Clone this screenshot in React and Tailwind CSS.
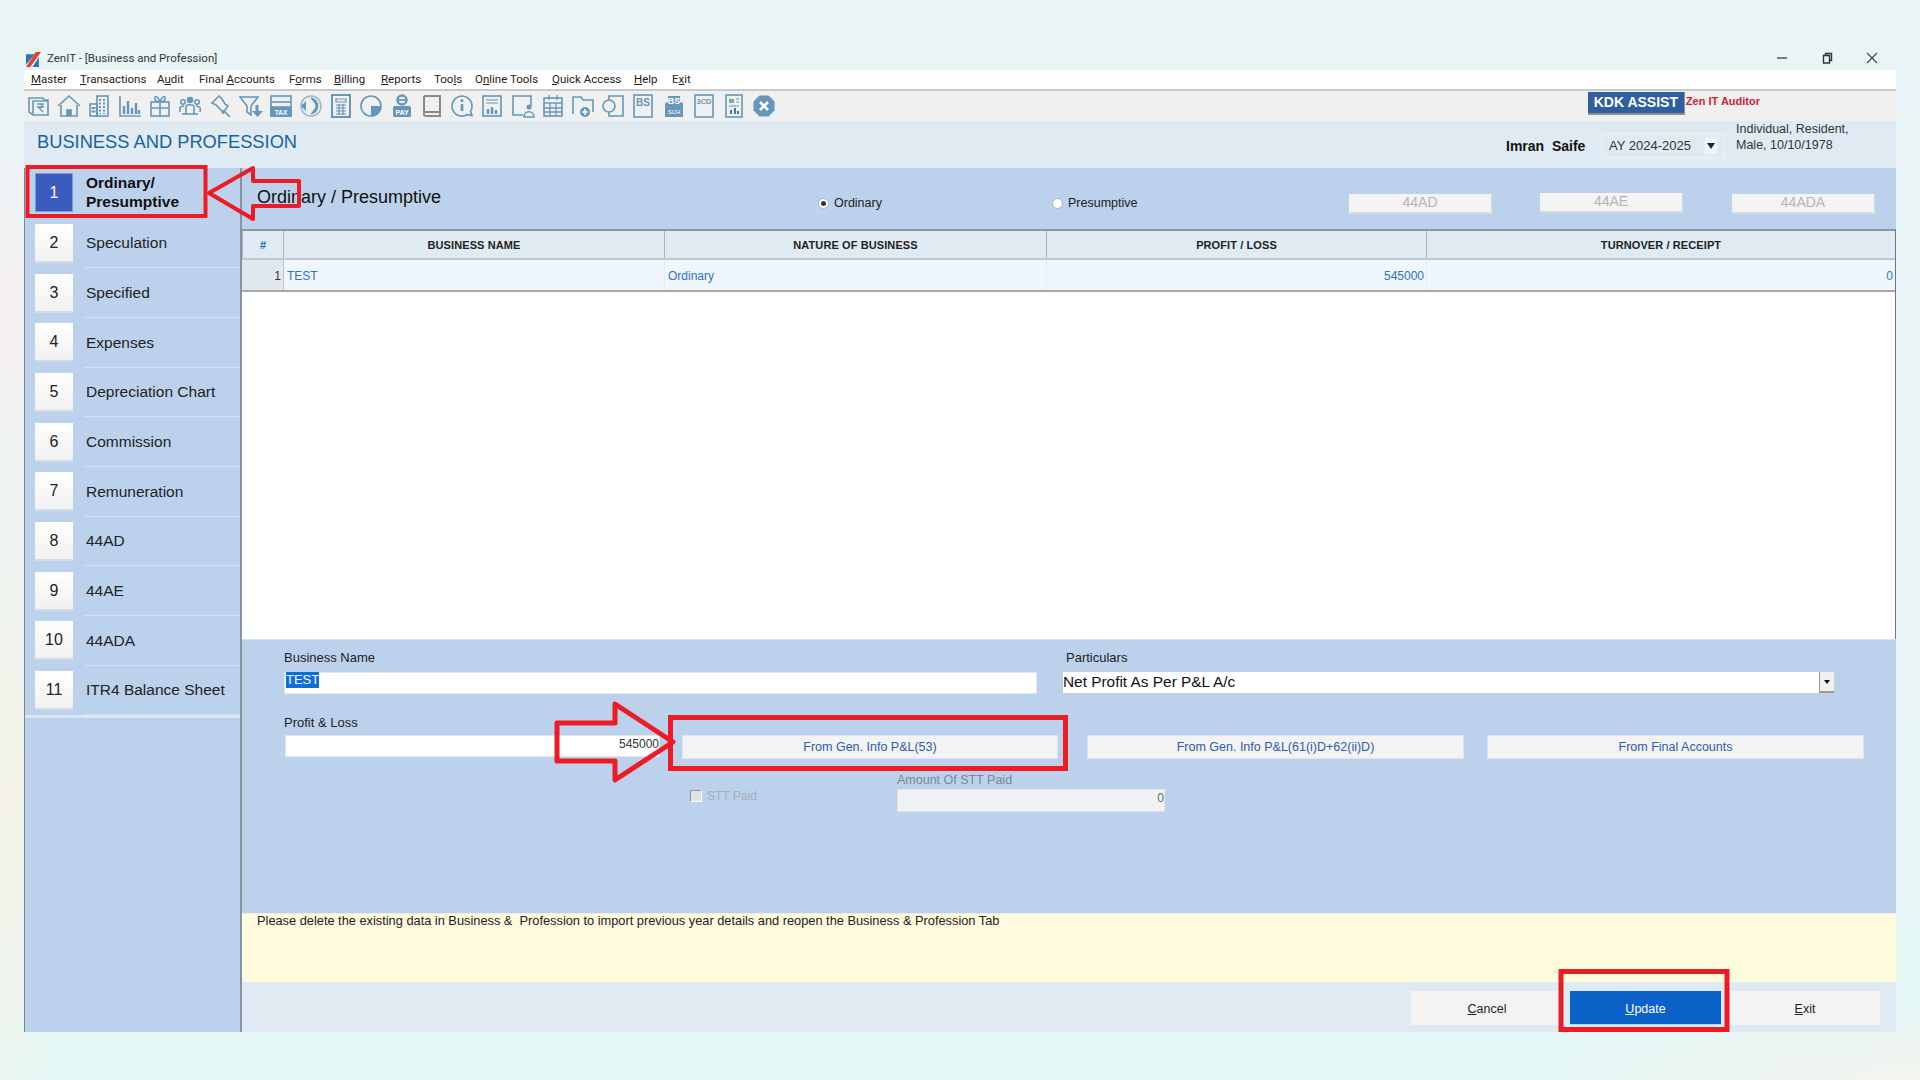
import React from "react";

const C = "#6497b9";
const Svg = ({ children }) => (
  <svg viewBox="0 0 24 24" width="24" height="24" fill="none" stroke={C} strokeWidth="1.6" className="shrink-0">
    {children}
  </svg>
);

const icons = [
  <Svg key="1"><path d="M2 4h14l1 2h4v15H6l-4-3z" /><path d="M6 21V7h15" /><path d="M10 10h7M10 13h7M12 10c4 0 4 4 0 4l4 4" strokeWidth="1.3" /></Svg>,
  <Svg key="2"><path d="M1 12 12 2l11 10" /><path d="M4 11v11h16V11" /><path d="M10 22v-6h4v6" fill={C} /></Svg>,
  <Svg key="3"><rect x="10" y="2" width="11" height="20" /><rect x="3" y="10" width="7" height="12" /><path d="M13 5v15M17 5v15M5.500 13v7M7.500 13v7" strokeDasharray="2 1.500" strokeWidth="2" /></Svg>,
  <Svg key="4"><path d="M2 2v20h21" /><path d="M6 20v-8M10 20v-13M14 20v-6M18 20V9M21 20v-4" strokeWidth="2.400" /></Svg>,
  <Svg key="5"><rect x="3" y="8" width="18" height="14" /><path d="M3 14h18M12 8v14M12 8C8 8 6 6 7 3c2-1 4 2 5 5 1-3 3-6 5-5 1 3-1 5-5 5z" /></Svg>,
  <Svg key="6"><circle cx="12" cy="6" r="2.500" fill={C} /><circle cx="5" cy="8" r="2.200" /><circle cx="19" cy="8" r="2.200" /><path d="M8 21v-8c0-3 8-3 8 0v8M2 18c-1-4 0-6 4-6M22 18c1-4 0-6-4-6M4 20h16" /></Svg>,
  <Svg key="7"><path d="M11 2 4 9l4 2 5 5 2 3 5-7-3-2-3-5z" /><path d="M15 16l7 7" /></Svg>,
  <Svg key="8"><path d="M1 3h18l-7 9v9l-4-3v-6z" /><path d="M18 11v7" strokeWidth="3" /><path d="M13 17h11l-5.500 6z" fill={C} stroke="none" /></Svg>,
  <Svg key="9"><rect x="2" y="2" width="20" height="20" /><path d="M2 8h20" /><rect x="2" y="13" width="20" height="9" fill={C} /><text x="12" y="20.500" fontSize="6.500" fontWeight="700" fill="#fff" stroke="none" textAnchor="middle" fontFamily="Liberation Sans">TAX</text></Svg>,
  <Svg key="10"><circle cx="12" cy="12" r="10" strokeOpacity=".6" /><path d="M11 3.500a8.500 8.500 0 0 1 0 17l4-5a5 5 0 0 0 0-7z" fill={C} stroke="none" /><path d="M2 12l5-5v10z" fill={C} stroke="none" /></Svg>,
  <Svg key="11"><rect x="3" y="1" width="18" height="22" strokeWidth="2" /><path d="M7 5h10v3H7zM7 11h10M7 14h10M7 17h10M7 20h10M10 10v11M14 10v11" strokeWidth="1.200" /></Svg>,
  <Svg key="12"><circle cx="12" cy="12" r="10" /><path d="M12 12h10a10 10 0 0 1-10 10z" fill={C} stroke="none" /><path d="M12 12h10a10 10 0 0 0-10-10z" fill={C} stroke="none" transform="rotate(90 12 12)" /></Svg>,
  <Svg key="13"><circle cx="12" cy="6" r="4.500" strokeWidth="2.500" /><path d="M8 6h8" strokeWidth="1.800" /><rect x="3" y="12" width="18" height="11" rx="1.500" fill={C} stroke="none" /><text x="12" y="20.800" fontSize="7" fontWeight="700" fill="#fff" stroke="none" textAnchor="middle" fontFamily="Liberation Sans">PAY</text></Svg>,
  <Svg key="14"><path d="M5 2h15v20H6a2 2 0 0 1-2-2V3z" stroke="#8a8a8a" strokeWidth="2" /><path d="M4 18h16" stroke="#8a8a8a" strokeWidth="2" /></Svg>,
  <Svg key="15"><path d="M22 12a10 10 0 1 0-5 8.700l5 .800-1.500-4A10 10 0 0 0 22 12z" /><path d="M12 10v7" strokeWidth="2.600" /><circle cx="12" cy="6.500" r="1.500" fill={C} stroke="none" /></Svg>,
  <Svg key="16"><rect x="3" y="2" width="18" height="20" /><path d="M6 6h12M6 9h12" strokeWidth="1.200" /><path d="M8 20v-5M12 20v-7M16 20v-4" strokeWidth="2.400" /></Svg>,
  <Svg key="17"><path d="M12 21H2V2h18v10" /><circle cx="18" cy="13" r="2.500" fill={C} stroke="none" /><path d="M13 23c0-7 10-7 10 0z" fill="none" /></Svg>,
  <Svg key="18"><rect x="3" y="4" width="18" height="18" /><path d="M8 1v5M16 1v5M3 9h18M9 9v13M15 9v13M3 14h18M3 18h18" strokeWidth="1.300" /></Svg>,
  <Svg key="19"><path d="M2 20V3h8l2 3h10v12" /><circle cx="14" cy="18" r="5" fill={C} stroke="none" /><path d="M14 15v6M11 18h6" stroke="#fff" /></Svg>,
  <Svg key="20"><path d="M8 6V2h14v20H8v-4" /><circle cx="8" cy="12" r="6" /></Svg>,
  <Svg key="21"><rect x="3" y="1" width="18" height="22" /><text x="12" y="12" fontSize="10" fontWeight="700" fill={C} stroke="none" textAnchor="middle" fontFamily="Liberation Sans">BS</text></Svg>,
  <Svg key="22"><path d="M3 9l3-1V2h12v6l3 1v14H3z" fill={C} stroke="none" /><text x="12" y="10" fontSize="9" fontWeight="700" fill="#fff" stroke="none" textAnchor="middle" fontFamily="Liberation Sans">BS</text><text x="12" y="20" fontSize="6" fill="#fff" stroke="none" textAnchor="middle" fontFamily="Liberation Sans">SCH</text></Svg>,
  <Svg key="23"><rect x="3" y="1" width="18" height="22" /><text x="12" y="10" fontSize="7.500" fontWeight="700" fill={C} stroke="none" textAnchor="middle" fontFamily="Liberation Sans">3CD</text></Svg>,
  <Svg key="24"><rect x="4" y="1" width="16" height="22" /><path d="M7 5h5v4H7z" fill="#6fb39a" stroke="none" /><path d="M14 5h3M14 8h3M7 12h10" strokeWidth="1.200" /><path d="M9 20v-4M13 20v-6M16 20v-3" strokeWidth="2" stroke="#3f7d92" /></Svg>,
  <Svg key="25"><path d="M7.500 1.500h9l6 6v9l-6 6h-9l-6-6v-9z" fill={C} stroke="none" /><path d="M8 8l8 8M16 8l-8 8" stroke="#fff" strokeWidth="2.600" /></Svg>,
];

const menus = [
  ["", "M", "aster", "w-[49px]"],
  ["", "T", "ransactions", "w-[77px]"],
  ["A", "u", "dit", "w-[42px]"],
  ["Final ", "A", "ccounts", "w-[90px]"],
  ["F", "o", "rms", "w-[45px]"],
  ["", "B", "illing", "w-[47px]"],
  ["", "R", "eports", "w-[53px]"],
  ["Too", "l", "s", "w-[41px]"],
  ["O", "n", "line Tools", "w-[77px]"],
  ["", "Q", "uick Access", "w-[82px]"],
  ["", "H", "elp", "w-[38px]"],
  ["E", "x", "it", "w-[30px]"],
];

const side = [
  "Speculation",
  "Specified",
  "Expenses",
  "Depreciation Chart",
  "Commission",
  "Remuneration",
  "44AD",
  "44AE",
  "44ADA",
  "ITR4 Balance Sheet",
];

const sans = "font-['Liberation_Sans',Arial,sans-serif]";
const ui = "font-['Roboto',sans-serif]";
const cols = "grid grid-cols-[42px_381px_382px_380px_468px]";
const btn3d = "bg-[#f3f3f3] border-b-2 border-r border-[#d5dbe2] flex items-center justify-center text-[14px] text-[#b5b5b5]";
const actionBtn = "h-[24px] bg-[#f3f3f3] border border-[#dbe5f1] flex items-center justify-center text-[12.500px] text-[#2a5db0]";

function Radio({ on }) {
  return (
    <span className="w-[11px] h-[11px] rounded-full bg-white border border-[#aab2bc] flex items-center justify-center">
      {on && <span className="w-[5px] h-[5px] rounded-full bg-[#333]" />}
    </span>
  );
}

export default function App() {
  return (
    <div className={`relative w-[1920px] h-[1080px] overflow-hidden px-[24px] pt-[48px] ${sans} bg-[radial-gradient(ellipse_70px_420px_at_0px_800px,#f6f3e6,transparent),radial-gradient(ellipse_70px_220px_at_0px_320px,#f6eff0,transparent),radial-gradient(ellipse_400px_80px_at_1920px_1080px,#f4f4ef,transparent),linear-gradient(180deg,#e9f4f7_0%,#e9f4f7_60%,#e3f7f5_100%)]`}>
      <div className="w-[1872px] h-[984px] flex flex-col">
        {/* Title bar */}
        <div className={`h-[22px] flex items-center text-[11.500px] text-[#333] ${ui}`}>
          <svg viewBox="0 0 14 14" width="15" height="15" className="ml-[2px]">
            <path d="M0 2h8L0 12z" fill="#2f6fb5" />
            <path d="M9 0h5L4 14H0z" fill="#e2452f" />
            <path d="M12 5v9H6z" fill="#2f6fb5" />
          </svg>
          <span className="ml-[6px]">ZenIT - [Business and Profession]</span>
          <div className="ml-auto -mt-[2px] flex items-center text-[#444]">
            <svg width="12" height="12" viewBox="0 0 12 12" className="mr-[33px]"><path d="M1 6h10" stroke="#555" strokeWidth="1.500" /></svg>
            <svg width="12" height="12" viewBox="0 0 12 12" className="mr-[33px]"><path d="M2.500 3.500h6v7.500h-6zM4.500 3.500V1.500h6v7h-2" fill="none" stroke="#333" strokeWidth="1.400" /></svg>
            <svg width="12" height="12" viewBox="0 0 12 12" className="mr-[18px]"><path d="M1 1l10 10M11 1 1 11" stroke="#444" strokeWidth="1.200" /></svg>
          </div>
        </div>

        {/* Menu */}
        <div className={`h-[19px] bg-white flex items-center pl-[7px] text-[11.500px] text-[#222] ${ui}`}>
          {menus.map(([a, u, b, w]) => (
            <span key={a + u + b} className={`${w} whitespace-pre leading-none`}>
              {a}
              <span className="underline">{u}</span>
              {b}
            </span>
          ))}
        </div>

        {/* Toolbar */}
        <div className="h-[32px] bg-[#f0f0f0] border-t-2 border-[#c9c9c9] flex items-center pl-[3px] gap-[6.220px]">
          {icons}
          <div className="ml-auto mr-[136px] flex items-start self-start mt-[1px]">
            <div className="w-[97px] h-[23px] bg-[#2f5f9e] border-b-2 border-r border-[#8b8f96] text-white text-[14px] font-bold flex items-center justify-center">
              KDK ASSIST
            </div>
            <span className="ml-[1px] mt-[2px] text-[11px] font-bold text-[#d3212d] leading-[14px]">Zen IT Auditor</span>
          </div>
        </div>

        {/* Page header */}
        <div className="h-[47px] bg-[#e0eaf3] flex items-center pl-[13px]">
          <span className="text-[18.300px] text-[#17639c] leading-none -mt-[4px]">BUSINESS AND PROFESSION</span>
          <div className="ml-auto w-[390px] flex items-center">
            <span className="w-[95px] mt-[4px] text-[14px] font-bold text-[#111] whitespace-pre">Imran  Saife</span>
            <div className="w-[124px] h-[26px] mt-[3px] border-2 border-[#e9eef4] bg-[#e0eaf3] flex items-center pl-[6px] text-[13px] text-[#333]">
              AY 2024-2025
              <span className="ml-auto mr-[6px] w-[12px] h-[16px] bg-[#f1f4f8] flex items-center justify-center">
                <span className="w-0 h-0 border-x-[4px] border-t-[6px] border-x-transparent border-t-[#222]" />
              </span>
            </div>
            <div className="ml-[11px] text-[12.500px] leading-[16px] text-[#333] -mt-[16px]">
              Individual, Resident,
              <br />
              Male, 10/10/1978
            </div>
          </div>
        </div>

        {/* Body */}
        <div className="flex-1 flex min-h-0">
          {/* Sidebar */}
          <div className="w-[218px] shrink-0 bg-[#bcd1eb] border-l border-r-2 border-[#7d8790] border-r-[#8893a0] pl-[10px] pt-[1px]">
            <div className="h-[49.670px] flex items-center">
              <div className="w-[38px] h-[39px] -mt-[2px] bg-[#3a5cbe] border border-[#7f9bd0] text-white text-[16px] flex items-center justify-center">1</div>
              <div className="ml-[13px] -mt-[3px] text-[15.500px] leading-[19px] font-bold text-[#111]">
                Ordinary/
                <br />
                Presumptive
              </div>
            </div>
            {side.map((s, i) => (
              <div key={s} className="h-[49.670px] flex items-center">
                <div className="w-[38px] h-[39px] pt-[1px] bg-[linear-gradient(180deg,#ffffff,#f1f1f1)] border-b-2 border-[#d3dbe5] text-[#222] text-[16px] flex items-center justify-center">
                  {i + 2}
                </div>
                <div className="ml-[10px] pl-[3px] flex-1 h-full flex items-center text-[15.500px] text-[#222] border-b border-[#d3e0f0]">{s}</div>
              </div>
            ))}
            <div className="-ml-[10px] h-[3px] bg-[#dbe6f3]" />
          </div>

          {/* Content */}
          <div className="flex-1 min-w-0 flex flex-col">
            <div className="h-[61px] bg-[#bcd1eb] flex items-center pl-[15px] relative shrink-0">
              <span className="text-[18px] text-[#111] -mt-[2px] w-[561px]">Ordinary / Presumptive</span>
              <div className="flex items-center gap-[5px] text-[12.500px] text-[#222] mt-[9px] w-[234px]">
                <Radio on /> Ordinary
              </div>
              <div className="flex items-center gap-[5px] text-[12.500px] text-[#222] mt-[9px] w-[297px]">
                <Radio /> Presumptive
              </div>
              <div className={`${btn3d} w-[143px] h-[20px] mt-[10px]`}>44AD</div>
              <div className={`${btn3d} w-[143px] h-[20px] mt-[8px] ml-[48px]`}>44AE</div>
              <div className={`${btn3d} w-[143px] h-[20px] mt-[10px] ml-[49px]`}>44ADA</div>
            </div>

            <div className="flex-1 min-h-0 bg-white border-r border-[#6f7680]">
              <div className={`${cols} h-[31px] bg-[#e0eaf3] border-t-2 border-b-2 border-[#8e969e] border-b-[#bfc6cd] text-[11px] tracking-[0.1px] font-bold text-[#222]`}>
                <div className="flex items-center justify-center pt-[1px] border-x border-[#a9b2bb] text-[#1f6fb2]">#</div>
                <div className="flex items-center justify-center pt-[1px] border-r border-[#a9b2bb]">BUSINESS NAME</div>
                <div className="flex items-center justify-center pt-[1px] border-r border-[#a9b2bb]">NATURE OF BUSINESS</div>
                <div className="flex items-center justify-center pt-[1px] border-r border-[#a9b2bb]">PROFIT / LOSS</div>
                <div className="flex items-center justify-center pt-[1px]">TURNOVER / RECEIPT</div>
              </div>
              <div className={`${cols} h-[32px] bg-[#f0f6fd] border-b-2 border-[#a8a8a8] text-[12px] text-[#2f74c8]`}>
                <div className="flex items-center justify-end pr-[2px] pt-[1px] bg-[#e2e8ef] text-[#333] border-r border-[#bcc5ce]">1</div>
                <div className="flex items-center pl-[3px] pt-[1px] border-r border-[#e8eef5]">TEST</div>
                <div className="flex items-center pl-[3px] pt-[1px] border-r border-[#e8eef5]">Ordinary</div>
                <div className="flex items-center justify-end pr-[2px] pt-[1px] border-r border-[#e8eef5]">545000</div>
                <div className="flex items-center justify-end pr-[2px] pt-[1px]">0</div>
              </div>
            </div>

            {/* Form */}
            <div className="h-[274px] shrink-0 bg-[#bcd1eb] border-t border-[#d5e1ef] pt-[10px] pl-[42px] text-[13px] text-[#222]">
              <div className="flex items-start">
                <div className="w-[753px]">
                  <div className="h-[16px] leading-[16px]">Business Name</div>
                  <div className="mt-[6px] h-[22px] bg-white border border-[#dfe8f2] flex items-center pl-[1px]">
                    <span className="bg-[#0a6fd6] text-white text-[13px] leading-[16px] font-medium -mt-[6px]">TEST</span>
                  </div>
                </div>
                <div className="ml-[25px] w-[773px]">
                  <div className="h-[16px] leading-[16px] pl-[4px]">Particulars</div>
                  <div className="mt-[5px] h-[23px] bg-white border border-[#c9ced6] flex items-center text-[15.400px] text-[#111]">
                    <span className="-mt-[2px]">Net Profit As Per P&amp;L A/c</span>
                    <span className="ml-auto w-[15px] h-full bg-[#f0f0f0] border-l border-b-2 border-[#9a9a9a] flex items-center justify-center">
                      <span className="w-0 h-0 border-x-[3px] border-t-[4px] border-x-transparent border-t-[#111]" />
                    </span>
                  </div>
                </div>
              </div>

              <div className="mt-[22px] h-[14px] leading-[14px]">Profit &amp; Loss</div>
              <div className="mt-[5px] flex items-start ml-[1px]">
                <div className="w-[375px] h-[22px] bg-white border border-[#dfe8f2] flex items-center justify-end text-[12px] text-[#333]">
                  <span className="-mt-[5px]">545000</span>
                </div>
                <div className={`${actionBtn} ml-[22px] w-[376px]`}>From Gen. Info P&amp;L(53)</div>
                <div className={`${actionBtn} ml-[29px] w-[377px]`}>From Gen. Info P&amp;L(61(i)D+62(ii)D)</div>
                <div className={`${actionBtn} ml-[23px] w-[377px]`}>From Final Accounts</div>
              </div>

              <div className="mt-[15px] flex items-start ml-[1px]">
                <div className="ml-[405px] w-[207px] mt-[13px] flex items-center text-[12px] text-[#a4aeba]">
                  <span className="w-[12px] h-[12px] bg-[#dfe3e8] border border-[#8f959c] border-b-white border-r-white" />
                  <span className="ml-[5px]">STT Paid</span>
                </div>
                <div>
                  <div className="text-[12.500px] leading-[14px] text-[#7e8791] -mt-[1px]">Amount Of STT Paid</div>
                  <div className="mt-[2px] w-[268px] h-[23px] bg-[#f1f2f3] border border-[#dde4ec] text-right text-[12px] text-[#666] leading-[16px]">0</div>
                </div>
              </div>
            </div>

            {/* Notice */}
            <div className="h-[69px] shrink-0 bg-[#fefadc] border-t border-[#e8ecec] pl-[15px] text-[12.800px] leading-[14px] text-[#222] whitespace-pre">
              Please delete the existing data in Business &amp;  Profession to import previous year details and reopen the Business &amp; Profession Tab
            </div>

            {/* Footer */}
            <div className="h-[50px] shrink-0 bg-[#e0eaf3] flex items-start pt-[9px] pl-[1169px] text-[12.500px] text-[#222]">
              <div className="w-[152px] h-[34px] pt-[2px] bg-[#f3f3f3] flex items-center justify-center"><span><span className="underline">C</span>ancel</span></div>
              <div className="ml-[7px] w-[151px] h-[34px] pt-[3px] bg-[#0a62c8] border-b border-[#b8d0ec] text-white flex items-center justify-center"><span><span className="underline">U</span>pdate</span></div>
              <div className="ml-[9px] w-[150px] h-[34px] pt-[2px] bg-[#f3f3f3] flex items-center justify-center"><span><span className="underline">E</span>xit</span></div>
            </div>
          </div>
        </div>
      </div>

      {/* Red call-out annotations */}
      <svg width="1920" height="1080" className="absolute inset-0 pointer-events-none" fill="none" stroke="#ed1c24">
        <rect x="27.500" y="167" width="178" height="49" strokeWidth="4" />
        <path d="M209 193 253 168V181H299V206H253V219Z" strokeWidth="4" strokeLinejoin="round" />
        <path d="M557 723H615V704L673 742 615 780V761H557Z" strokeWidth="5" strokeLinejoin="round" />
        <rect x="670.500" y="717.500" width="395" height="51" strokeWidth="5" />
        <rect x="1561" y="971.500" width="166" height="58" strokeWidth="5" />
      </svg>
    </div>
  );
}
